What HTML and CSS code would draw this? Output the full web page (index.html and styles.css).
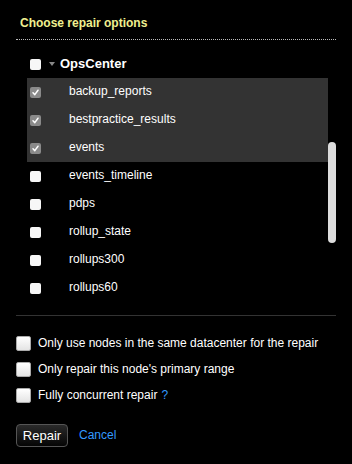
FILE: index.html
```html
<!DOCTYPE html>
<html lang="en">
<head>
    <meta charset="UTF-8">
    <meta name="viewport" content="width=device-width, initial-scale=1.0">
    <title>Choose repair options</title>
    <link rel="stylesheet" href="styles.css">
</head>
<body>
    <div class="dialog">
        <div class="title">Choose repair options</div>

        <div class="tree">
            <div class="row keyspace">
                <span class="box"></span>
                <span class="caret"></span>
                <span class="name">OpsCenter</span>
            </div>
            <div class="row selected">
                <span class="box checked"><svg width="11" height="11" viewBox="0 0 11 11"><path d="M3 5.8 L4.8 7.6 L8 3.2" fill="none" stroke="#fff" stroke-width="1.5" stroke-linecap="round" stroke-linejoin="round"/></svg></span>
                <span class="name">backup_reports</span>
            </div>
            <div class="row selected">
                <span class="box checked"><svg width="11" height="11" viewBox="0 0 11 11"><path d="M3 5.8 L4.8 7.6 L8 3.2" fill="none" stroke="#fff" stroke-width="1.5" stroke-linecap="round" stroke-linejoin="round"/></svg></span>
                <span class="name">bestpractice_results</span>
            </div>
            <div class="row selected">
                <span class="box checked"><svg width="11" height="11" viewBox="0 0 11 11"><path d="M3 5.8 L4.8 7.6 L8 3.2" fill="none" stroke="#fff" stroke-width="1.5" stroke-linecap="round" stroke-linejoin="round"/></svg></span>
                <span class="name">events</span>
            </div>
            <div class="row"><span class="box"></span><span class="name">events_timeline</span></div>
            <div class="row"><span class="box"></span><span class="name">pdps</span></div>
            <div class="row"><span class="box"></span><span class="name">rollup_state</span></div>
            <div class="row"><span class="box"></span><span class="name">rollups300</span></div>
            <div class="row"><span class="box"></span><span class="name">rollups60</span></div>
            <div class="scrollbar"></div>
        </div>

        <div class="options">
            <label class="option"><span class="big-box"></span>Only use nodes in the same datacenter for the repair</label>
            <label class="option"><span class="big-box"></span>Only repair this node's primary range</label>
            <label class="option"><span class="big-box"></span>Fully concurrent repair <a class="help">?</a></label>
        </div>

        <div class="actions">
            <button class="repair">Repair</button>
            <a class="cancel">Cancel</a>
        </div>
    </div>
</body>
</html>
```

FILE: styles.css
```css
body {
    margin: 0;
    background-color: #000;
    color: #fff;
    font-family: "Liberation Sans", Arial, sans-serif;
    font-size: 12px;
}

.dialog {
    padding: 0 16px;
}

.title {
    padding: 15px 4px 8px;
    line-height: 16px;
    font-weight: bold;
    color: #f0f090;
    border-bottom: 1px dotted #bbb;
}

.tree {
    position: relative;
    margin: 10px 0 0 11px;
}

.row {
    display: flex;
    align-items: center;
    height: 28px;
    margin-right: 8px;
    padding-left: 3px;
}

.row.selected {
    background-color: #333;
}

.box {
    display: flex;
    width: 11px;
    height: 11px;
    border-radius: 2px;
    background-color: #f7f7f7;
}

.box.checked {
    background-color: #8a8a8a;
}

.row .name {
    margin-left: 28px;
    margin-top: -3px;
}

.keyspace .caret {
    margin-left: 8px;
    width: 0;
    height: 0;
    border-left: 3px solid transparent;
    border-right: 3px solid transparent;
    border-top: 4px solid #888;
}

.keyspace .name {
    margin-left: 5px;
    margin-top: -2px;
    font-weight: bold;
    font-size: 13px;
}

.scrollbar {
    position: absolute;
    right: 0;
    top: 92px;
    width: 8px;
    height: 101px;
    border-radius: 4px;
    background-color: #ddd;
}

.options {
    margin-top: 13px;
    padding-top: 14px;
    border-top: 1px solid #333;
}

.option {
    display: flex;
    align-items: center;
    height: 26px;
    white-space: nowrap;
}

.big-box {
    width: 13px;
    height: 13px;
    margin-right: 7px;
    border: 1px solid #aaa;
    border-radius: 2px;
    background: linear-gradient(#fff, #e4e4e4);
}

.help {
    margin-left: 4px;
    color: #3399ff;
}

.actions {
    display: flex;
    align-items: center;
    gap: 11px;
    margin-top: 16px;
}

.repair {
    width: 52px;
    height: 23px;
    padding: 0;
    border: 1px solid #555;
    border-radius: 4px;
    background: linear-gradient(#2a2a2a, #050505);
    color: #fff;
    font-family: inherit;
    font-size: 13px;
}

.cancel {
    color: #3399ff;
    margin-top: -1px;
}
```
